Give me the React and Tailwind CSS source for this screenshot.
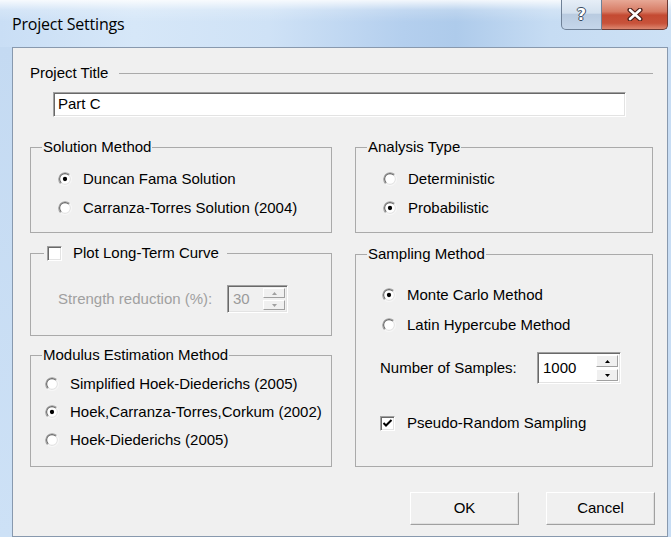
import React from "react";

// Classic 3D radio button mark
function RadioMark({ checked }) {
  return (
    <svg width="14" height="14" viewBox="0 0 13 13" className="shrink-0">
      <circle cx="6.5" cy="6.5" r="6" fill="#fff" stroke="#f7f7f7" strokeWidth="1" />
      <path d="M2.26 10.74 A6 6 0 0 1 10.74 2.26" fill="none" stroke="#a0a0a0" strokeWidth="1" />
      <circle cx="6.5" cy="6.5" r="5" fill="none" stroke="#e3e3e3" strokeWidth="1" />
      <path d="M2.96 10.04 A5 5 0 0 1 10.04 2.96" fill="none" stroke="#696969" strokeWidth="1" />
      {checked && <circle cx="6.5" cy="6.5" r="2" fill="#000" />}
    </svg>
  );
}

function CheckMark({ checked }) {
  return (
    <span className="w-[15px] h-[15px] shrink-0 bg-white border border-t-[#a0a0a0] border-l-[#a0a0a0] border-b-white border-r-white shadow-[inset_1px_1px_0_#696969,inset_-1px_-1px_0_#e3e3e3] flex items-center justify-center">
      {checked && (
        <svg width="11" height="11" viewBox="0 0 11 11">
          <path d="M1.5 5 L4 7.5 L9.5 2" fill="none" stroke="#000" strokeWidth="2" />
        </svg>
      )}
    </span>
  );
}

function Radio({ checked, label, className }) {
  return (
    <div className={"flex items-center gap-[11px] " + className}>
      <RadioMark checked={checked} />
      <span className="leading-[18px]">{label}</span>
    </div>
  );
}

function SpinButton({ up, disabled }) {
  return (
    <div className="flex-1 flex items-center justify-center bg-[#f0f0f0] border border-t-white border-l-white border-b-[#a0a0a0] border-r-[#a0a0a0]">
      <svg width="5" height="3" viewBox="0 0 5 3">
        <path d={up ? "M0 3 L2.5 0 L5 3 Z" : "M0 0 L2.5 3 L5 0 Z"} fill={disabled ? "#a0a0a0" : "#000"} />
      </svg>
    </div>
  );
}

function Spinner({ value, disabled, className }) {
  return (
    <div
      className={
        "flex p-[1px] border border-t-[#a0a0a0] border-l-[#a0a0a0] border-b-white border-r-white shadow-[inset_1px_1px_0_#696969,inset_-1px_-1px_0_#e3e3e3] " +
        (disabled ? "bg-[#f0f0f0] " : "bg-white ") +
        className
      }
    >
      <div className={"flex-1 flex items-center pl-[4px] " + (disabled ? "text-[#9a9a9a]" : "text-black")}>{value}</div>
      <div className="flex flex-col w-[23px] gap-[2px] py-[1px] pr-[1px]">
        <SpinButton up disabled={disabled} />
        <SpinButton disabled={disabled} />
      </div>
    </div>
  );
}

// Etched group box; the padding sits on an inner block so the legend keeps its own offset
function Group({ legend, className, bodyClass, children }) {
  return (
    <fieldset className={"border border-[#aaaaaa] " + className}>
      <legend className="ml-[11px] px-[1px] leading-[18px]">{legend}</legend>
      <div className={bodyClass}>{children}</div>
    </fieldset>
  );
}

function PushButton({ children }) {
  return (
    <div className="w-[109px] h-[33px] flex items-center justify-center bg-[#f0f0f0] border border-t-white border-l-white border-b-[#a0a0a0] border-r-[#a0a0a0] shadow-[inset_-1px_-1px_0_#e0e0e0]">
      {children}
    </div>
  );
}

function TitleBar() {
  return (
    <div className="h-[47px] flex items-start bg-[linear-gradient(180deg,rgba(255,255,255,0.85)_0px,rgba(255,255,255,0.2)_10px,rgba(255,255,255,0)_22px),linear-gradient(90deg,#c9def5_0%,#d6e7f8_20%,#cfe2f6_40%,#b4cfee_60%,#aecbeb_68%,#c6dcf3_82%,#cde1f5_100%)]">
      <div className="pl-[12px] pt-[13px] font-['Open_Sans','Noto_Sans',sans-serif] text-[16px] leading-[22px] tracking-[-0.2px] text-black">
        Project Settings
      </div>
      <div className="ml-auto mr-[3px] flex">
        <div className="w-[41px] h-[30px] flex items-center justify-center rounded-bl-[5px] border border-t-0 border-[#6f8197] bg-[linear-gradient(180deg,#e6eef7_0%,#d3e0ee_45%,#b9cbe0_50%,#c5d6ea_100%)]">
          <span className="font-['DejaVu_Sans',sans-serif] font-bold text-[16px] leading-none text-white [text-shadow:1px_0_0_#3a4a60,-1px_0_0_#3a4a60,0_1px_0_#3a4a60,0_-1px_0_#3a4a60]">
            ?
          </span>
        </div>
        <div className="w-[66px] h-[30px] flex items-center justify-center rounded-br-[5px] border border-t-0 border-l-0 border-[#6d3a34] bg-[linear-gradient(180deg,#e7a896_0%,#d67a63_40%,#c44a32_52%,#c8523a_80%,#dc8770_100%)]">
          <svg width="18" height="13" viewBox="0 0 18 13">
            <path d="M4 2 L14 11 M14 2 L4 11" stroke="#4a1e18" strokeWidth="5" strokeLinecap="round" />
            <path d="M4 2 L14 11 M14 2 L4 11" stroke="#fff" strokeWidth="2.6" strokeLinecap="round" />
          </svg>
        </div>
      </div>
    </div>
  );
}

export default function App() {
  return (
    <div className="w-[671px] h-[537px] overflow-hidden flex flex-col bg-[#c6dcf3] font-['Liberation_Sans',Arial,sans-serif] text-[15px] text-black">
      <TitleBar />
      <div className="flex flex-1 min-h-0">
        <div className="w-[12px] bg-[linear-gradient(180deg,#c4daf2,#cde1f6)]" />
        <div className="flex-1 flex flex-col border border-[#8899ae] bg-[#f0f0f0] pl-[17px] pr-[14px] pt-[16px]">
          {/* Project title */}
          <div className="flex items-center h-[18px] leading-[18px]">
            <span>Project Title</span>
            <div className="flex-1 ml-[11px] h-px bg-[#aaaaaa]" />
          </div>
          <div className="mt-[10px] ml-[23px] w-[573px] h-[25px] flex items-center pl-[4px] bg-white border border-t-[#a0a0a0] border-l-[#a0a0a0] border-b-white border-r-white shadow-[inset_1px_1px_0_#696969,inset_-1px_-1px_0_#e3e3e3]">
            Part C
          </div>

          <div className="flex gap-[23px] mt-[21px]">
            {/* Left column */}
            <div className="w-[302px] flex flex-col">
              <Group legend="Solution Method" bodyClass="pt-[8px] pb-[10px] pl-[27px]">
                <Radio checked label="Duncan Fama Solution" className="h-[29px]" />
                <Radio label="Carranza-Torres Solution (2004)" className="h-[29px]" />
              </Group>

              <fieldset className="mt-[11px] border border-[#aaaaaa]">
                <legend className="ml-[13px] pl-[3px] pr-[8px] leading-[18px] flex items-center gap-[11px]">
                  <CheckMark />
                  <span>Plot Long-Term Curve</span>
                </legend>
                <div className="pt-[23px] pb-[22px] pl-[27px] flex items-center">
                  <span className="w-[169px] text-[#a0a0a0]">Strength reduction (%):</span>
                  <Spinner value="30" disabled className="w-[61px] h-[28px]" />
                </div>
              </fieldset>

              <Group legend="Modulus Estimation Method" className="mt-[10px]" bodyClass="pt-[6px] pb-[12px] pl-[14px]">
                <Radio label="Simplified Hoek-Diederichs (2005)" className="h-[28px]" />
                <Radio checked label="Hoek,Carranza-Torres,Corkum (2002)" className="h-[28px]" />
                <Radio label="Hoek-Diederichs (2005)" className="h-[28px]" />
              </Group>
            </div>

            {/* Right column */}
            <div className="flex-1 flex flex-col">
              <Group legend="Analysis Type" bodyClass="pt-[8px] pb-[10px] pl-[27px]">
                <Radio label="Deterministic" className="h-[29px]" />
                <Radio checked label="Probabilistic" className="h-[29px]" />
              </Group>

              <Group legend="Sampling Method" className="mt-[12px]" bodyClass="pt-[17px] pb-[29px]">
                <Radio checked label="Monte Carlo Method" className="h-[30px] pl-[26px]" />
                <Radio label="Latin Hypercube Method" className="h-[30px] pl-[26px]" />
                <div className="mt-[12px] h-[32px] flex items-center pl-[24px]">
                  <span className="w-[157px]">Number of Samples:</span>
                  <Spinner value="1000" className="w-[84px] h-[32px]" />
                </div>
                <div className="mt-[25px] h-[28px] flex items-center gap-[12px] pl-[24px]">
                  <CheckMark checked />
                  <span>Pseudo-Random Sampling</span>
                </div>
              </Group>
            </div>
          </div>

          <div className="mt-[25px] -mr-[2px] flex justify-end gap-[27px]">
            <PushButton>OK</PushButton>
            <PushButton>Cancel</PushButton>
          </div>
        </div>
        <div className="w-[3px] bg-[#c8ddf4]" />
      </div>
    </div>
  );
}
